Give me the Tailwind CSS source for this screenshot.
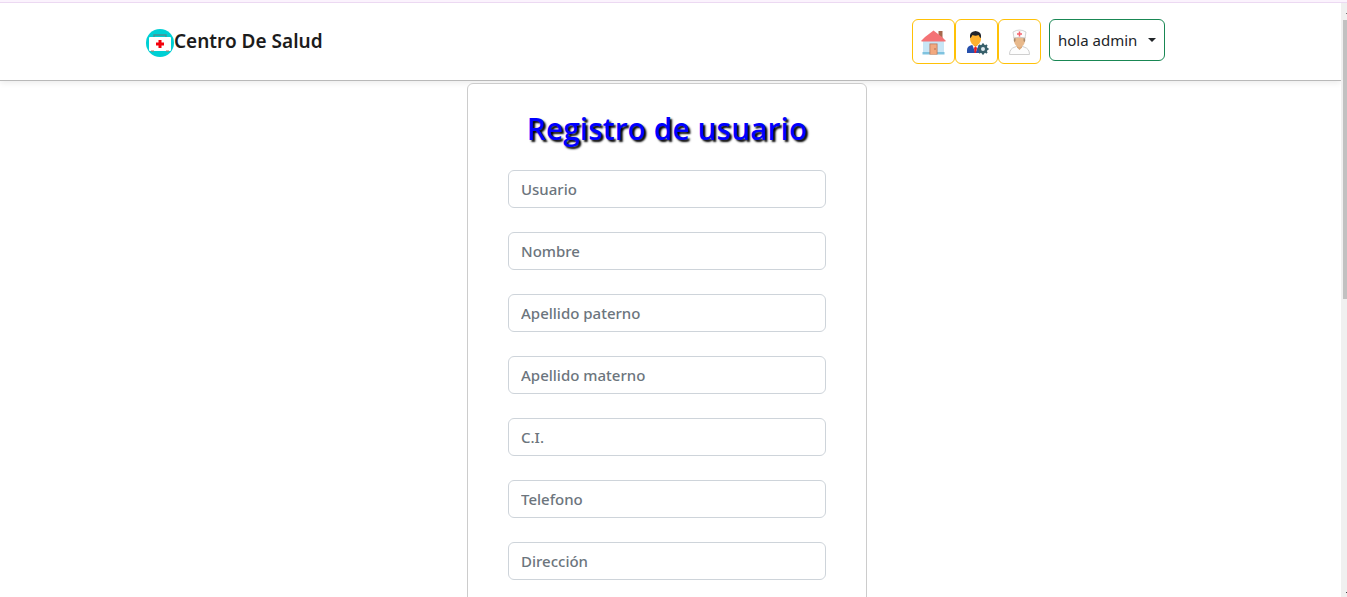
<!DOCTYPE html>
<html lang="es">
<head>
<meta charset="utf-8">
<meta name="viewport" content="width=device-width, initial-scale=1">
<title>Centro De Salud</title>
<script src="https://cdn.jsdelivr.net/npm/@tailwindcss/browser@4"></script>
</head>
<body class="flex h-screen flex-col overflow-hidden bg-white font-['Segoe_UI','Noto_Sans',sans-serif] text-[#212529]">
<div class="h-[3px] shrink-0 border-b border-[#ecd9f2] bg-[#fbf3fd]"></div>
<div class="flex min-h-0 flex-1">
  <div class="min-w-0 flex-1 overflow-hidden">
    <header class="border-b border-[#b9b9b9] bg-white shadow-[0_2px_6px_rgba(0,0,0,0.08)]">
      <nav class="flex items-start justify-between pt-4 pb-4 pl-[146px] pr-[176px]">
        <a href="#" class="mt-2 flex items-start text-[19px] leading-7 font-semibold text-[#1c1c1c]">
          <svg class="mt-[2px] size-7" viewBox="0 0 28 28" aria-hidden="true">
            <circle cx="14" cy="14" r="14" fill="#00d0d4"/>
            <path d="M8 8V6h12v2" fill="none" stroke="#4d8e92" stroke-width="1.300"/>
            <rect x="3" y="8" width="22" height="14" rx="1" fill="#fff"/>
            <path d="M5 22h3M20 22h3" stroke="#b57a62" stroke-width="1.200"/>
            <path d="M12.500 11h3v2.500H18v3h-2.500V19h-3v-2.500H10v-3h2.500z" fill="#f3000c"/>
          </svg>
          <span>Centro De Salud</span>
        </a>
        <div class="flex items-start">
          <button type="button" aria-label="Inicio" class="flex h-[45px] w-[43px] items-center justify-center rounded-md border border-[#ffc107]">
            <svg class="size-7" viewBox="0 0 28 28" aria-hidden="true">
              <path d="M18.500 3h4v7h-4z" fill="#a6684c"/>
              <path d="M3 12h21v14H3z" fill="#c8e6f6"/>
              <path d="M2.500 24h22v2.500h-22z" fill="#7fc3df"/>
              <path d="M1.500 13.500v-1L5 9l8.500-6.500L22 9l3.500 3.500v1z" fill="#f47275"/>
              <path d="M9.500 15.500h8v11h-8z" fill="#b8765a"/>
              <path d="M10.300 16.300h6.400v10.200h-6.400z" fill="#f2a97f"/>
              <circle cx="15" cy="21" r=".7" fill="#925a43"/>
            </svg>
          </button>
          <button type="button" aria-label="Administrar usuarios" class="flex h-[45px] w-[43px] items-center justify-center rounded-md border border-[#ffc107]">
            <svg class="size-7" viewBox="0 0 28 28" aria-hidden="true">
              <path d="M4 25v-3q0-4 5-5l3-1 3 1q5 1 5 5v3z" fill="#2750ac"/>
              <path d="m9 16 3.500 9L16 16z" fill="#fff"/>
              <path d="m12.500 18 1.500 2-1 5h-1.500l-.5-5z" fill="#ed1c24"/>
              <path d="M10 13h5v4l-2.500 2L10 17z" fill="#f49b20"/>
              <ellipse cx="12.500" cy="11" rx="5.500" ry="6.500" fill="#ffb22e"/>
              <path d="M7 10q-1-6.500 5.500-7Q19 3.500 18 10l-1-.5-1.500-2.500q-3 1.500-6 0L8 9.500z" fill="#20242c"/>
              <circle cx="20" cy="21" r="3.300" fill="#dfeaf0" stroke="#38606b" stroke-width="2.600"/>
              <path d="M20 15.500v2m0 7v2m-5.500-5.500h2m7 0h2m-9.500-4 1.500 1.500m5 5 1.500 1.500m0-8-1.500 1.500m-5 5L16 25" stroke="#38606b" stroke-width="2"/>
            </svg>
          </button>
          <button type="button" aria-label="Personal médico" class="flex h-[45px] w-[43px] items-center justify-center rounded-md border border-[#ffc107]">
            <svg class="size-7" viewBox="0 0 28 28" aria-hidden="true">
              <path d="M3.500 26.500q0-6 5.500-7.500l2-.7h5l2 .7q5.500 1.500 5.500 7.500z" fill="#fdfdfd" stroke="#cfcfcf"/>
              <path d="M11 15h5v4.500l-2.500 2.500-2.500-2.500z" fill="#dba97a"/>
              <path d="M8 8h11v5q-.5 5-5.500 6.500Q8.500 18 8 13z" fill="#e8b98c"/>
              <path d="M7.800 9h1.700v4l-1 1-.7-1zM17.500 9h1.700v4l-.7 1-1-1z" fill="#a98969"/>
              <path d="M7 4q6.500-4 13 0l-1 6q-5.500-1.500-11 0z" fill="#fbfbfb" stroke="#c7c7c7" stroke-width=".8"/>
              <path d="M13.500 3.500v5M11 6h5" stroke="#f6616c" stroke-width="1.500"/>
            </svg>
          </button>
          <button type="button" class="ml-2 flex h-[42px] w-[116px] items-center justify-between rounded-md border border-[#198754] px-2 text-[15px] leading-6">
            hola admin
            <svg class="h-1 w-2" viewBox="0 0 8 4" aria-hidden="true"><path d="M0 0h8L4 4z" fill="#212529"/></svg>
          </button>
        </div>
      </nav>
    </header>
    <main class="pt-[2px] pr-[7px]">
      <form class="relative mx-auto flex w-full max-w-[400px] flex-col gap-6 rounded-md border border-[#ccc] bg-white px-10 pt-6 pb-10">
        <h1 class="-mb-1 text-center font-['Segoe_UI','Open_Sans',sans-serif] text-[30px] leading-[42px] font-semibold whitespace-nowrap text-[#0000ff] [text-shadow:2px_2px_2px_#000]">Registro de usuario</h1>
        <input type="text" aria-label="Usuario" placeholder="Usuario" class="h-[38px] w-full shrink-0 rounded-md border border-[#ced4da] px-3 text-[15px] font-medium placeholder:text-[#6c757d]">
        <input type="text" aria-label="Nombre" placeholder="Nombre" class="h-[38px] w-full shrink-0 rounded-md border border-[#ced4da] px-3 text-[15px] font-medium placeholder:text-[#6c757d]">
        <input type="text" aria-label="Apellido paterno" placeholder="Apellido paterno" class="h-[38px] w-full shrink-0 rounded-md border border-[#ced4da] px-3 text-[15px] font-medium placeholder:text-[#6c757d]">
        <input type="text" aria-label="Apellido materno" placeholder="Apellido materno" class="h-[38px] w-full shrink-0 rounded-md border border-[#ced4da] px-3 text-[15px] font-medium placeholder:text-[#6c757d]">
        <input type="text" aria-label="C.I." placeholder="C.I." class="h-[38px] w-full shrink-0 rounded-md border border-[#ced4da] px-3 text-[15px] font-medium placeholder:text-[#6c757d]">
        <input type="tel" aria-label="Telefono" placeholder="Telefono" class="h-[38px] w-full shrink-0 rounded-md border border-[#ced4da] px-3 text-[15px] font-medium placeholder:text-[#6c757d]">
        <input type="text" aria-label="Dirección" placeholder="Dirección" class="h-[38px] w-full shrink-0 rounded-md border border-[#ced4da] px-3 text-[15px] font-medium placeholder:text-[#6c757d]">
      </form>
    </main>
  </div>
  <div class="flex w-[6px] shrink-0 flex-col items-end bg-[#f0f0f0] pt-[10px] pb-1" aria-hidden="true">
    <div class="mb-[6px] h-px w-px bg-[#777]"></div>
    <div class="h-[279px] w-1 bg-[#c1c1c1]"></div>
    <div class="mt-auto h-px w-px bg-[#444]"></div>
  </div>
</div>
</body>
</html>
